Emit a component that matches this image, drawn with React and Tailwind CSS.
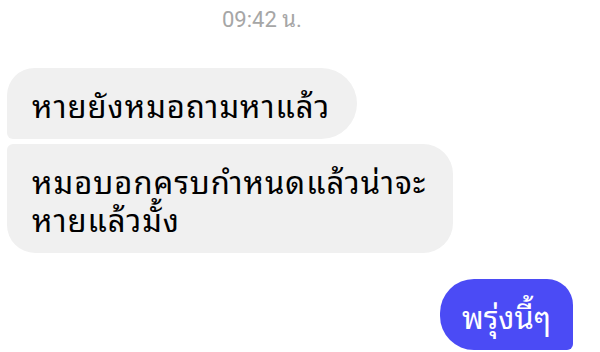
export default function App() {
  const thai = { fontFamily: "'Noto Sans Thai Looped', 'Noto Sans Thai', sans-serif" };
  return (
    <div className="w-[600px] h-[352px] bg-white overflow-hidden flex flex-col" style={thai}>
      <div className="pt-[6px] pl-[222px] text-[22px] leading-[28px] text-[#a6a6a6]" style={{ fontFamily: "Roboto, 'Noto Sans Thai Looped', sans-serif" }}>
        09:42 น.
      </div>
      <div className="mt-[34px] pl-[7px] flex flex-col items-start gap-[5px]">
        <div className="bg-[#f0f0f0] text-black text-[31px] tracking-[1px] leading-[38px] pl-[25px] pr-[27px] py-[16.5px] rounded-tl-[28px] rounded-tr-[36px] rounded-br-[36px] rounded-bl-[6px] whitespace-nowrap">
          หายยังหมอถามหาแล้ว
        </div>
        <div className="bg-[#f0f0f0] text-black text-[31px] tracking-[1px] leading-[38px] pl-[25px] pr-[27px] py-[16.5px] rounded-tl-[6px] rounded-tr-[30px] rounded-br-[30px] rounded-bl-[28px] whitespace-nowrap">
          หมอบอกครบกำหนดแล้วน่าจะ
          <br />
          หายแล้วมั้ง
        </div>
      </div>
      <div className="mt-[26px] flex justify-end pr-[27px]">
        <div className="bg-[#4b4bf5] text-white text-[31px] leading-[38px] px-[22px] py-[16.5px] rounded-tl-[34px] rounded-tr-[26px] rounded-br-[6px] rounded-bl-[34px] whitespace-nowrap">
          พรุ่งนี้ๆ
        </div>
      </div>
    </div>
  );
}
